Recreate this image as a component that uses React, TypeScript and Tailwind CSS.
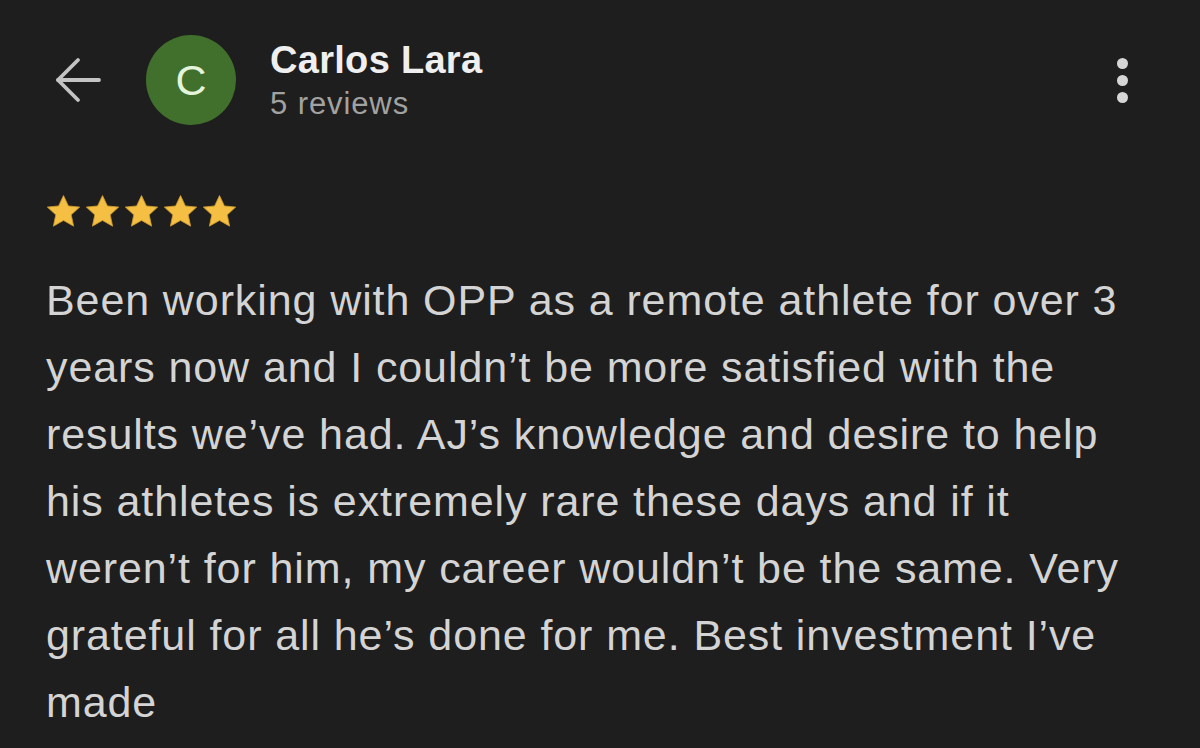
function Star() {
  return (
    <svg viewBox="2.2 2.2 19.6 19.6" className="w-[33px] h-[33px]">
      <path
        d="M12 2.5l2.9 6.2 6.7.7-5 4.6 1.4 6.7L12 17.3l-6 3.4 1.4-6.7-5-4.6 6.7-.7z"
        fill="#f4bf42"
        stroke="#c99a2e"
        strokeWidth="0.5"
        strokeLinejoin="round"
      />
    </svg>
  );
}

function BackArrow() {
  return (
    <svg viewBox="0 0 48 48" className="w-[48px] h-[48px]" fill="none" stroke="#c4c4c4" strokeWidth="3.8" strokeLinecap="round" strokeLinejoin="round">
      <path d="M45 24H4" />
      <path d="M24 4L4 24l20 20" />
    </svg>
  );
}

export default function App() {
  const text =
    "Been working with OPP as a remote athlete for over 3 years now and I couldn\u2019t be more satisfied with the results we\u2019ve had. AJ\u2019s knowledge and desire to help his athletes is extremely rare these days and if it weren\u2019t for him, my career wouldn\u2019t be the same. Very grateful for all he\u2019s done for me. Best investment I\u2019ve made";

  return (
    <div className="w-[1200px] h-[748px] bg-[#1e1e1e] overflow-hidden font-['Liberation_Sans',Arial,sans-serif]">
      {/* Header */}
      <div className="flex items-center h-[90px] mt-[35px] pl-[54px] pr-[72px]">
        <BackArrow />
        <div className="ml-[44px] w-[90px] h-[90px] rounded-full bg-[#41702c] flex items-center justify-center text-[#e4f4dc] text-[43px]">
          C
        </div>
        <div className="ml-[34px] flex flex-col">
          <div className="text-[#efefef] text-[38px] font-bold leading-[44px] tracking-[0.3px]">Carlos Lara</div>
          <div className="text-[#a2a2a2] text-[31px] leading-[36px] tracking-[0.9px] mt-[4px]">5 reviews</div>
        </div>
        <div className="ml-auto flex flex-col gap-[6px]">
          <div className="w-[11px] h-[11px] rounded-full bg-[#d6d6d6]" />
          <div className="w-[11px] h-[11px] rounded-full bg-[#d6d6d6]" />
          <div className="w-[11px] h-[11px] rounded-full bg-[#d6d6d6]" />
        </div>
      </div>

      {/* Stars */}
      <div className="flex gap-[6px] pl-[47px] mt-[70px]">
        <Star />
        <Star />
        <Star />
        <Star />
        <Star />
      </div>

      {/* Review text */}
      <p className="pl-[46px] pr-[60px] mt-[39px] text-[#d4d4d4] text-[43px] leading-[67px] tracking-[0.9px]">
        {text}
      </p>
    </div>
  );
}
